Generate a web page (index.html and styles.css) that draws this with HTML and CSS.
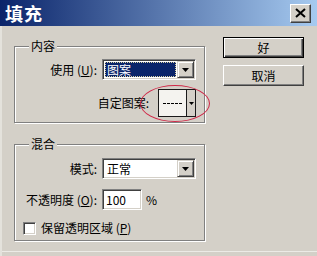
FILE: index.html
```html
<!DOCTYPE html>
<html lang="zh">
<head>
  <meta charset="UTF-8" />
  <title>填充</title>
  <link rel="stylesheet" href="styles.css">
</head>
<body>
  <div class="window">
    <div class="titlebar">
      <span class="title">填充</span>
      <button class="close-btn" type="button">
        <svg width="11" height="10" viewBox="0 0 11 10"><path d="M1 1L10 9M10 1L1 9" stroke="#000" stroke-width="2" fill="none"/></svg>
      </button>
    </div>

    <div class="dialog-body">
      <div class="groups">
        <!-- 内容 -->
        <fieldset class="group group-content">
          <legend>内容</legend>
          <div class="field-row">
            <span class="field-label">使用 (<u>U</u>):</span>
            <div class="combo">
              <span class="combo-text"><span class="combo-value focused">图案</span></span>
              <span class="combo-btn"><svg width="7" height="4" viewBox="0 0 7 4"><path d="M0 0h7L3.5 4z" fill="#000"/></svg></span>
            </div>
          </div>
          <div class="pattern-row">
            <span class="field-label">自定图案:</span>
            <div class="pattern-picker">
              <span class="pattern-preview"><i class="dashes"></i></span>
              <span class="pattern-btn"><svg width="5" height="3" viewBox="0 0 5 3"><path d="M0 0h5L2.5 3z" fill="#000"/></svg></span>
              <span class="mark"></span>
            </div>
          </div>
        </fieldset>

        <!-- 混合 -->
        <fieldset class="group group-blend">
          <legend>混合</legend>
          <div class="field-row">
            <span class="field-label">模式:</span>
            <div class="combo">
              <span class="combo-text"><span class="combo-value">正常</span></span>
              <span class="combo-btn"><svg width="7" height="4" viewBox="0 0 7 4"><path d="M0 0h7L3.5 4z" fill="#000"/></svg></span>
            </div>
          </div>
          <div class="field-row">
            <span class="field-label">不透明度 (<u>O</u>):</span>
            <div class="input-wrap">
              <span class="text-input">100</span>
              <span class="unit">%</span>
            </div>
          </div>
          <div class="check-row">
            <span class="checkbox"></span>
            <span>保留透明区域 (<u>P</u>)</span>
          </div>
        </fieldset>
      </div>

      <div class="buttons">
        <button type="button" class="btn btn-default">好</button>
        <button type="button" class="btn">取消</button>
      </div>
    </div>
  </div>
</body>
</html>
```

FILE: styles.css
```css
:root {
  --face: #d4d0c8;
  --shadow: #808080;
  --dark: #404040;
  --hilite: #fff;
  --title-from: #0a246a;
  --title-to: #a6caf0;
}

body {
  margin: 0;
  font-family: "Noto Sans CJK SC", "Noto Sans", sans-serif;
  font-size: 12px;
  line-height: 14px;
  color: #000;
}

.window {
  width: 317px;
  height: 256px;
  background: var(--face);
  overflow: hidden;
  box-shadow: inset 2px 0 #e4e2dc, inset 0 -4px var(--face), inset 0 -5px #ecebe6;
}

.titlebar {
  height: 26px;
  display: flex;
  align-items: center;
  justify-content: space-between;
  padding: 0 6px 0 5px;
  background: linear-gradient(90deg, var(--title-from), var(--title-to));
}

.title {
  color: #fff;
  font-weight: bold;
  font-size: 18px;
  line-height: 20px;
  letter-spacing: 1px;
}

.close-btn {
  width: 21px;
  height: 19px;
  padding: 0;
  display: flex;
  align-items: center;
  justify-content: center;
  background: var(--face);
  border: 1px solid;
  border-color: var(--hilite) var(--dark) var(--dark) var(--hilite);
  box-shadow: inset -1px -1px var(--shadow);
}

.dialog-body {
  display: flex;
  align-items: flex-start;
  gap: 18px;
  padding: 11px 0 0 14px;
}

.groups {
  margin-top: 2px;
  width: 191px;
}

fieldset.group {
  margin: 0;
  min-width: 0;
  border: 1px solid var(--shadow);
  box-shadow: inset 1px 1px var(--hilite), 1px 1px var(--hilite);
}

legend {
  margin-left: 14px;
  padding: 0 2px;
  line-height: 14px;
  background: var(--face);
}

.group-content {
  padding: 6px 8px 5px 0;
}

.group-blend {
  margin-top: 14px !important;
  padding: 7px 8px 5px 0;
}

.field-row {
  display: grid;
  grid-template-columns: 82px 94px;
  column-gap: 5px;
  align-items: center;
}

.field-row + .field-row {
  margin-top: 10px;
}

.field-label {
  text-align: right;
  white-space: nowrap;
}

/* combo box */
.combo {
  display: flex;
  height: 21px;
  box-sizing: border-box;
  padding: 1px;
  background: #fff;
  border: 1px solid;
  border-color: var(--shadow) var(--hilite) var(--hilite) var(--shadow);
  box-shadow: inset 1px 1px var(--dark), inset -1px -1px var(--face);
}

.combo-text {
  flex: 1;
  display: flex;
  padding: 1px;
}

.combo-value {
  flex: 1;
  padding-left: 2px;
  line-height: 15px;
}

.combo-value.focused {
  background: var(--title-from);
  color: #fff;
  padding-left: 1px;
  border: 1px dotted #d8d0a0;
  line-height: 13px;
}

.combo-btn {
  width: 17px;
  box-sizing: border-box;
  display: flex;
  align-items: center;
  justify-content: center;
  background: var(--face);
  border: 1px solid;
  border-color: var(--face) var(--dark) var(--dark) var(--face);
  box-shadow: inset 1px 1px var(--hilite), inset -1px -1px var(--shadow);
}

/* pattern picker */
.pattern-row {
  display: flex;
  justify-content: flex-end;
  align-items: center;
  gap: 9px;
  margin-top: 9px;
}

.pattern-picker {
  position: relative;
  display: flex;
  width: 38px;
  height: 28px;
  box-sizing: border-box;
  border: 1px solid #1a1a1a;
}

.pattern-preview {
  flex: 1;
  display: flex;
  align-items: center;
  justify-content: center;
  background: #f4f3ef;
}

.dashes {
  width: 20px;
  height: 1px;
  background: repeating-linear-gradient(90deg, #000 0 3px, transparent 3px 4px);
}

.pattern-btn {
  width: 9px;
  box-sizing: border-box;
  display: flex;
  align-items: center;
  justify-content: center;
  border-left: 1px solid #1a1a1a;
  background: var(--face);
}

.mark {
  position: absolute;
  left: -19px;
  top: -5px;
  width: 70px;
  height: 37px;
  box-sizing: border-box;
  border: 1px solid #d02848;
  border-radius: 50%;
  pointer-events: none;
}

/* opacity */
.input-wrap {
  display: flex;
  align-items: center;
  gap: 4px;
}

.text-input {
  width: 40px;
  height: 21px;
  box-sizing: border-box;
  padding-left: 3px;
  line-height: 19px;
  background: #fff;
  border: 1px solid;
  border-color: var(--shadow) var(--hilite) var(--hilite) var(--shadow);
  box-shadow: inset 1px 1px var(--dark), inset -1px -1px var(--face);
}

/* checkbox */
.check-row {
  display: flex;
  align-items: center;
  gap: 5px;
  height: 14px;
  margin-top: 11px;
  padding-left: 8px;
}

.checkbox {
  width: 13px;
  height: 13px;
  box-sizing: border-box;
  background: #fff;
  border: 1px solid;
  border-color: var(--shadow) var(--hilite) var(--hilite) var(--shadow);
  box-shadow: inset 1px 1px var(--dark), inset -1px -1px var(--face);
}

/* buttons */
.buttons {
  display: flex;
  flex-direction: column;
  gap: 7px;
}

.btn {
  width: 81px;
  height: 21px;
  padding: 0;
  font-family: inherit;
  font-size: 12px;
  background: var(--face);
  border: 1px solid;
  border-color: var(--hilite) var(--dark) var(--dark) var(--hilite);
  box-shadow: inset -1px -1px var(--shadow);
}

.btn-default {
  border-color: #000;
  box-shadow: inset 1px 1px var(--hilite), inset -1px -1px var(--dark), inset -2px -2px var(--shadow);
}
```
